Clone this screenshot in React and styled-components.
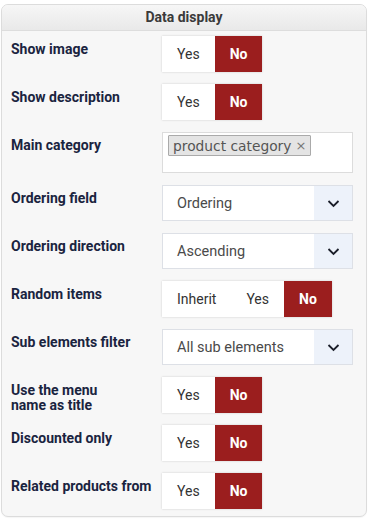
import React from 'react'
import styled, { createGlobalStyle } from 'styled-components'

const Global = createGlobalStyle`
  body {
    margin: 0;
    background: #ffffff;
    font-family: Roboto, "Liberation Sans", sans-serif;
  }
`

const Page = styled.div`
  padding: 4px 3px 4px 1px;
`

const Panel = styled.section`
  border: 1px solid #dcdcdc;
  border-radius: 7px;
  background: #f7f7f7;
  overflow: hidden;
  box-shadow: 0 1px 1px rgba(0, 0, 0, 0.04);
`

const Header = styled.header`
  height: 25px;
  line-height: 25px;
  text-align: center;
  font-size: 14px;
  font-weight: 700;
  color: #3a3a3a;
  background: linear-gradient(#f6f6f6, #e9e9e9);
  border-bottom: 1px solid #dddddd;
`

const Body = styled.div`
  padding: 5px 13px 7px 9px;
`

const Row = styled.div`
  display: grid;
  grid-template-columns: 151px 1fr;
  align-items: start;
  margin-bottom: 12px;
  &:last-child {
    margin-bottom: 0;
  }
`

const Label = styled.label`
  padding-top: 6px;
  font-size: 14px;
  line-height: 15px;
  font-weight: 700;
  color: #1a2440;
`

const Toggle = styled.div`
  display: inline-flex;
  justify-self: start;
  height: 36px;
  background: #ffffff;
  box-shadow: 0 0 2px rgba(0, 0, 0, 0.18);
`

const Choice = styled.span`
  display: flex;
  align-items: center;
  padding: 0 15px;
  font-size: 14px;
  font-weight: ${(p) => (p.$on ? 700 : 400)};
  color: ${(p) => (p.$on ? '#ffffff' : '#333333')};
  background: ${(p) => (p.$on ? '#9b1e1e' : 'transparent')};
`

const Select = styled.div`
  display: flex;
  width: 191px;
  height: 36px;
  box-sizing: border-box;
  border: 1px solid #dde0e6;
  background: #ffffff;
`

const SelectText = styled.span`
  flex: 1;
  display: flex;
  align-items: center;
  padding-left: 14px;
  font-size: 14.5px;
  color: #4a4a4a;
`

const Caret = styled.span`
  width: 38px;
  display: flex;
  align-items: center;
  justify-content: center;
  background: #edf2fa;
`

const TagBox = styled.div`
  width: 191px;
  height: 41px;
  box-sizing: border-box;
  border: 1px solid #dcdcdc;
  background: #ffffff;
  padding: 2px 5px;
`

const Tag = styled.span`
  display: inline-flex;
  align-items: center;
  gap: 4px;
  height: 21px;
  box-sizing: border-box;
  padding: 0 4px;
  border: 1px solid #aaaaaa;
  border-radius: 1px;
  background: #e4e4e4;
  font-family: "DejaVu Sans", Verdana, sans-serif;
  font-size: 13.8px;
  color: #555555;
`

const Remove = styled.span`
  color: #777777;
  font-size: 13px;
`

function Chevron() {
  return (
    <svg width="13" height="9" viewBox="0 0 13 9">
      <path d="M1.5 2 L6.5 7 L11.5 2" fill="none" stroke="#1b1f2a" strokeWidth="1.8" />
    </svg>
  )
}

function YesNo({ options = ['Yes', 'No'], value = 'No' }) {
  return (
    <Toggle>
      {options.map((o) => (
        <Choice key={o} $on={o === value}>{o}</Choice>
      ))}
    </Toggle>
  )
}

function Dropdown({ text }) {
  return (
    <Select>
      <SelectText>{text}</SelectText>
      <Caret><Chevron /></Caret>
    </Select>
  )
}

export default function App() {
  return (
    <Page>
      <Global />
      <Panel>
        <Header>Data display</Header>
        <Body>
          <Row>
            <Label>Show image</Label>
            <YesNo />
          </Row>
          <Row>
            <Label>Show description</Label>
            <YesNo />
          </Row>
          <Row>
            <Label>Main category</Label>
            <TagBox>
              <Tag>product category<Remove>×</Remove></Tag>
            </TagBox>
          </Row>
          <Row>
            <Label>Ordering field</Label>
            <Dropdown text="Ordering" />
          </Row>
          <Row>
            <Label>Ordering direction</Label>
            <Dropdown text="Ascending" />
          </Row>
          <Row>
            <Label>Random items</Label>
            <YesNo options={['Inherit', 'Yes', 'No']} />
          </Row>
          <Row>
            <Label>Sub elements filter</Label>
            <Dropdown text="All sub elements" />
          </Row>
          <Row>
            <Label>Use the menu<br />name as title</Label>
            <YesNo />
          </Row>
          <Row>
            <Label>Discounted only</Label>
            <YesNo />
          </Row>
          <Row>
            <Label>Related products from</Label>
            <YesNo />
          </Row>
        </Body>
      </Panel>
    </Page>
  )
}
